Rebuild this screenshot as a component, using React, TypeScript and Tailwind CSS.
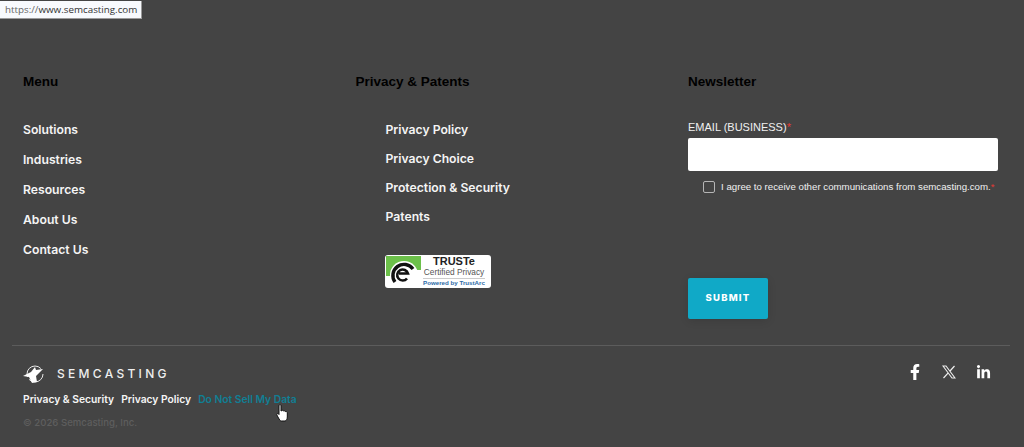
import { FaFacebookF, FaLinkedinIn } from "react-icons/fa";

const linkFont = "font-['Inter',sans-serif] font-semibold text-[12.2px] text-[#f5f5f5] leading-[20px]";
const headFont = "font-['Liberation_Sans',sans-serif] font-bold text-[13.5px] leading-[18px] text-black";

function Badge() {
  return (
    <div className="flex h-[33px] w-[106px] overflow-hidden rounded-[3px] bg-white">
      <div className="w-[37px] shrink-0">
        <svg width="37" height="33" viewBox="0 0 37 33">
          <rect x="1" y="1" width="35" height="14" fill="#6cc04a" />
          <rect x="1" y="15" width="6" height="6" fill="#6cc04a" />
          <circle cx="19" cy="20" r="14" fill="#fff" />
          <path d="M10 27 A10.5 10.5 0 1 1 28 14" fill="none" stroke="#111" strokeWidth="3.4" />
          <path d="M14 18.5 H23 A5.5 5.5 0 1 0 22 23.5" fill="none" stroke="#111" strokeWidth="2.6" />
        </svg>
      </div>
      <div className="flex w-[64px] flex-col items-center font-['Liberation_Sans',sans-serif] text-[#222]">
        <span className="text-[11px] font-bold leading-[12px]">TRUSTe</span>
        <span className="whitespace-nowrap text-[8.3px] leading-[10px] text-[#555]">Certified Privacy</span>
        <span className="mt-[1px] whitespace-nowrap border-t border-[#ccc] text-[6.2px] font-bold leading-[8px] text-[#2d6aa6]">Powered by TrustArc</span>
      </div>
    </div>
  );
}

function Cursor() {
  return (
    <svg className="absolute left-[264px] top-[58px]" width="13" height="18" viewBox="0 0 13 18">
      <path d="M3 1.5 C3 .5 5 .5 5 1.5 V7 L6 6.5 C7 6 7.5 6.5 7.5 7 C8.5 6.5 9.2 7 9.3 7.6 C10.3 7.2 11.3 7.8 11.3 8.8 V13 C11.3 15 10.3 17 9 17 H5.5 C4 17 3.5 15.5 2.5 14 L.9 11 C.4 10 1.6 9 2.5 9.8 L3 10.5 Z" fill="#fff" stroke="#111" strokeWidth="1" />
    </svg>
  );
}

function XIcon() {
  return (
    <svg width="14" height="14" viewBox="0 0 14 14" fill="none" stroke="#eeeeee">
      <path d="M1 1 H4 L13 13 H10 Z" strokeWidth="1.1" />
      <path d="M12.5 1 L8 6 M6 8.2 L1.5 13" strokeWidth="1.2" />
    </svg>
  );
}

export default function App() {
  return (
    <div className="relative h-[447px] w-[1024px] overflow-hidden bg-[#444444]">
      <div className="absolute left-0 top-px z-10 h-[18px] border-b border-r border-[#9a9a9a] bg-[#f8fafd] pl-[5px] pr-[4px] font-['Open_Sans',sans-serif] text-[9.8px] leading-[18px] text-[#333]">
        <span className="text-[#666]">https://</span>www.semcasting.com
      </div>

      <div className="mx-[12px] w-[998px] pt-[73px]">
        <div className="flex h-[273px] border-b border-[#5c5c5c] pl-[11px]">
          <div className="w-[332.5px] shrink-0">
            <h3 className={headFont}>Menu</h3>
            <ul className="mt-[29px] flex flex-col gap-[10px]">
              {["Solutions", "Industries", "Resources", "About Us", "Contact Us"].map((t) => (
                <li key={t} className={linkFont}>{t}</li>
              ))}
            </ul>
          </div>
          <div className="w-[332.5px] shrink-0">
            <h3 className={headFont}>Privacy &amp; Patents</h3>
            <ul className="mt-[29px] flex flex-col gap-[9px] pl-[30px]">
              {["Privacy Policy", "Privacy Choice", "Protection & Security", "Patents"].map((t) => (
                <li key={t} className={linkFont}>{t}</li>
              ))}
            </ul>
            <div className="mt-[28px] pl-[29.5px]"><Badge /></div>
          </div>
          <div className="w-[310px] shrink-0">
            <h3 className={headFont}>Newsletter</h3>
            <label className="mt-[29px] block font-['Liberation_Sans',sans-serif] text-[11px] leading-[14px] text-[#f0f0f0]">
              EMAIL (BUSINESS)<span className="text-[#e53935]">*</span>
            </label>
            <div className="mt-[4px] h-[33px] w-[310px] rounded-[2px] bg-white" />
            <div className="mt-[10px] flex items-center pl-[15px]">
              <div className="h-[12px] w-[12px] shrink-0 rounded-[2px] border border-[#b5b5b5]" />
              <span className="ml-[6px] whitespace-nowrap font-['Liberation_Sans',sans-serif] text-[9.7px] leading-[12px] text-[#f0f0f0]">
                I agree to receive other communications from semcasting.com.<span className="text-[#e53935]">*</span>
              </span>
            </div>
            <button className="mt-[85px] flex h-[41px] w-[80px] items-center justify-center rounded-[2px] bg-[#10a9c7] font-['Inter',sans-serif] text-[9.5px] font-extrabold tracking-[1.2px] text-white shadow-[0_2px_8px_rgba(0,0,0,0.12)]">
              SUBMIT
            </button>
          </div>
        </div>

        <div className="relative flex justify-between pl-[11px] pr-[19px] pt-[18px]">
          <div>
            <div className="flex h-[20px] items-center">
              <svg width="23" height="20" viewBox="0 0 23 20">
                <circle cx="12" cy="10" r="8" fill="none" stroke="#e8e8e8" strokeWidth="1" strokeDasharray="19 3 22 6" />
                <path d="M0 12 L8 8 L12 3 L13 6 L20 5 L13 12 L14 18 L9 19 L6 13 Z" fill="#fff" />
              </svg>
              <span className="ml-[11px] font-['Inter',sans-serif] text-[12px] font-medium leading-[20px] tracking-[3.3px] text-[#eeeeee]">SEMCASTING</span>
            </div>
            <div className="mt-[8px] flex gap-[7px] font-['Inter',sans-serif] text-[10.3px] font-semibold leading-[14px] text-[#f5f5f5]">
              <span>Privacy &amp; Security</span>
              <span>Privacy Policy</span>
              <span className="text-[#117f94]">Do Not Sell My Data</span>
            </div>
            <div className="mt-[10px] font-['Inter',sans-serif] text-[9.6px] font-medium leading-[14px] text-[#5e5e5e]">© 2026 Semcasting, Inc.</div>
          </div>
          <div className="flex h-[16px] items-center text-white">
            <FaFacebookF size={16} />
            <span className="ml-[19px] mr-[20px]"><XIcon /></span>
            <FaLinkedinIn size={15} />
          </div>
          <Cursor />
        </div>
      </div>
    </div>
  );
}
